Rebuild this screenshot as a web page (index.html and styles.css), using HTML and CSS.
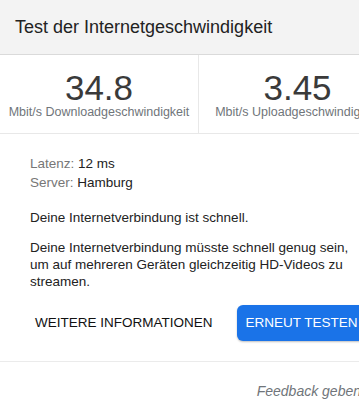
FILE: index.html
```html
<!DOCTYPE html>
<html lang="de">
<head>
    <meta charset="UTF-8">
    <meta name="viewport" content="width=device-width, initial-scale=1.0">
    <title>Test der Internetgeschwindigkeit</title>
    <link rel="stylesheet" href="styles.css">
</head>
<body>
    <div class="card">
        <div class="header">Test der Internetgeschwindigkeit</div>

        <div class="stats">
            <div class="stat">
                <div class="stat-value">34.8</div>
                <div class="stat-label">Mbit/s Downloadgeschwindigkeit</div>
            </div>
            <div class="stat">
                <div class="stat-value">3.45</div>
                <div class="stat-label">Mbit/s Uploadgeschwindigkeit</div>
            </div>
        </div>

        <div class="content">
            <div class="details">
                <div class="detail"><span class="detail-key">Latenz:</span> 12 ms</div>
                <div class="detail"><span class="detail-key">Server:</span> Hamburg</div>
            </div>
            <p>Deine Internetverbindung ist schnell.</p>
            <p>Deine Internetverbindung müsste schnell genug sein, um auf mehreren Geräten gleichzeitig HD-Videos zu streamen.</p>

            <div class="actions">
                <a href="#" class="btn btn-text">Weitere Informationen</a>
                <a href="#" class="btn btn-primary">Erneut testen</a>
            </div>
        </div>

        <div class="footer">
            <a href="#" class="feedback">Feedback geben</a>
        </div>
    </div>
</body>
</html>
```

FILE: styles.css
```css
* {
    margin: 0;
    padding: 0;
    box-sizing: border-box;
}

body {
    font-family: Arial, "Liberation Sans", sans-serif;
    background: #fff;
    color: #222;
    overflow: hidden;
}

.card {
    width: 396px;
    background: #fff;
}

.header {
    height: 55px;
    line-height: 54px;
    padding: 0 15px;
    font-size: 18px;
    color: #222;
    background: #f3f3f3;
    border-bottom: 1px solid #dadada;
}

.stats {
    display: grid;
    grid-template-columns: 198px 198px;
    border-bottom: 1px solid #e8e8e8;
}

.stat {
    padding: 16px 0 14px;
    text-align: center;
}

.stat + .stat {
    border-left: 1px solid #e8e8e8;
}

.stat-value {
    font-size: 35px;
    line-height: 34px;
    color: #3a3a3a;
}

.stat-label {
    font-size: 12.5px;
    line-height: 14px;
    color: #70757a;
    white-space: nowrap;
}

.content {
    padding: 20px 30px 0;
    font-size: 13.5px;
}

.detail {
    line-height: 19px;
}

.detail-key {
    color: #777;
}

.details {
    margin-bottom: 17px;
}

.content p {
    line-height: 17px;
    margin-bottom: 13px;
}

.content p:last-of-type {
    margin-bottom: 15px;
}

.actions {
    display: flex;
    gap: 16px;
    margin-left: -3px;
}

.btn {
    display: inline-block;
    height: 36px;
    line-height: 36px;
    padding: 0 8px;
    font-size: 13.5px;
    text-transform: uppercase;
    text-decoration: none;
    white-space: nowrap;
    border-radius: 6px;
}

.btn-text {
    color: #111;
}

.btn-primary {
    padding: 0 9px;
    color: #fff;
    background: #1a73e8;
    box-shadow: 0 1px 2px rgba(0, 0, 0, 0.25);
}

.footer {
    margin-top: 20px;
    padding: 19px 35px 0 0;
    border-top: 1px solid #ebebeb;
    text-align: right;
}

.feedback {
    font-size: 14px;
    line-height: 20px;
    font-style: italic;
    color: #70757a;
    text-decoration: none;
}
```
